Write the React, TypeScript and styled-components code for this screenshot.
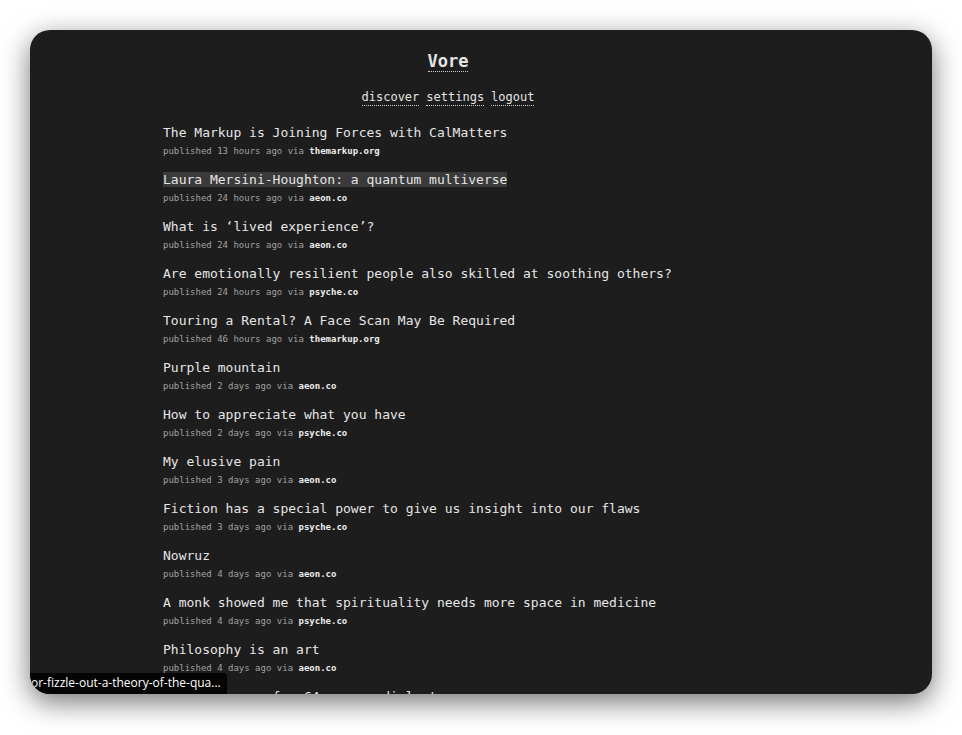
import React from "react";
import styled, { createGlobalStyle } from "styled-components";

const GlobalStyle = createGlobalStyle`
  html, body { margin: 0; padding: 0; background: #ffffff; }
  body { font-family: "DejaVu Sans Mono", "Liberation Mono", monospace; }
`;

const Page = styled.div`
  padding: 30px 30px 0 30px;
  box-sizing: border-box;
  width: 962px;
  height: 735px;
`;

const Window = styled.div`
  position: relative;
  height: 664px;
  border-radius: 20px;
  background: #1d1d1d;
  overflow: hidden;
  box-shadow: 0 8px 28px rgba(0, 0, 0, 0.55);
`;

const Column = styled.main`
  margin-left: 133px;
  width: 570px;
  padding-top: 20px;
`;

const Header = styled.header`
  display: flex;
  flex-direction: column;
  align-items: center;
  gap: 17px;
  margin-bottom: 18px;
`;

const Title = styled.h1`
  margin: 0;
  font-size: 17px;
  line-height: 22px;
  font-weight: bold;
`;

const DottedLink = styled.a`
  color: #e4e4e4;
  text-decoration: none;
  border-bottom: 1px dotted #d0d0d0;
`;

const Nav = styled.nav`
  display: flex;
  gap: 7px;
  font-size: 12px;
  line-height: 16px;
`;

const List = styled.ul`
  list-style: none;
  margin: 0;
  padding: 0;
  display: flex;
  flex-direction: column;
  gap: 13px;
`;

const Item = styled.li`
  display: flex;
  flex-direction: column;
  gap: 2px;
`;

const ItemTitle = styled.a<{ $hover?: boolean }>`
  align-self: flex-start;
  font-size: 13px;
  line-height: 18px;
  color: #e6e6e6;
  text-decoration: none;
  span {
    background: ${(p) => (p.$hover ? "#3a3a3a" : "transparent")};
  }
`;

const Meta = styled.div`
  font-size: 9px;
  line-height: 14px;
  color: #a2a2a2;
`;

const Domain = styled.a`
  color: #ececec;
  font-weight: bold;
  text-decoration: none;
`;

const StatusBubble = styled.div`
  position: absolute;
  left: 0;
  bottom: 0;
  width: 197px;
  height: 21px;
  box-sizing: border-box;
  padding-left: 1px;
  background: #050505;
  border-top-right-radius: 4px;
  color: #ffffff;
  font-family: "Open Sans", "Noto Sans", sans-serif;
  font-size: 12px;
  line-height: 20px;
  white-space: nowrap;
  overflow: hidden;
`;

const items = [
  ["The Markup is Joining Forces with CalMatters", "13 hours", "themarkup.org"],
  ["Laura Mersini-Houghton: a quantum multiverse", "24 hours", "aeon.co"],
  ["What is ‘lived experience’?", "24 hours", "aeon.co"],
  ["Are emotionally resilient people also skilled at soothing others?", "24 hours", "psyche.co"],
  ["Touring a Rental? A Face Scan May Be Required", "46 hours", "themarkup.org"],
  ["Purple mountain", "2 days", "aeon.co"],
  ["How to appreciate what you have", "2 days", "psyche.co"],
  ["My elusive pain", "3 days", "aeon.co"],
  ["Fiction has a special power to give us insight into our flaws", "3 days", "psyche.co"],
  ["Nowruz", "4 days", "aeon.co"],
  ["A monk showed me that spirituality needs more space in medicine", "4 days", "psyche.co"],
  ["Philosophy is an art", "4 days", "aeon.co"],
  ["Dream owners of a 64 square dial at sea", "5 days", "aeon.co"],
];

export default function App() {
  return (
    <>
      <GlobalStyle />
      <Page>
        <Window>
          <Column>
            <Header>
              <Title>
                <DottedLink href="#">Vore</DottedLink>
              </Title>
              <Nav>
                <DottedLink href="#">discover</DottedLink>
                <DottedLink href="#">settings</DottedLink>
                <DottedLink href="#">logout</DottedLink>
              </Nav>
            </Header>
            <List>
              {items.map(([t, when, dom], i) => (
                <Item key={i}>
                  <ItemTitle href="#" $hover={i === 1}>
                    <span>{t}</span>
                  </ItemTitle>
                  <Meta>
                    published {when} ago via <Domain href="#">{dom}</Domain>
                  </Meta>
                </Item>
              ))}
            </List>
          </Column>
          <StatusBubble>or-fizzle-out-a-theory-of-the-qua...</StatusBubble>
        </Window>
      </Page>
    </>
  );
}
